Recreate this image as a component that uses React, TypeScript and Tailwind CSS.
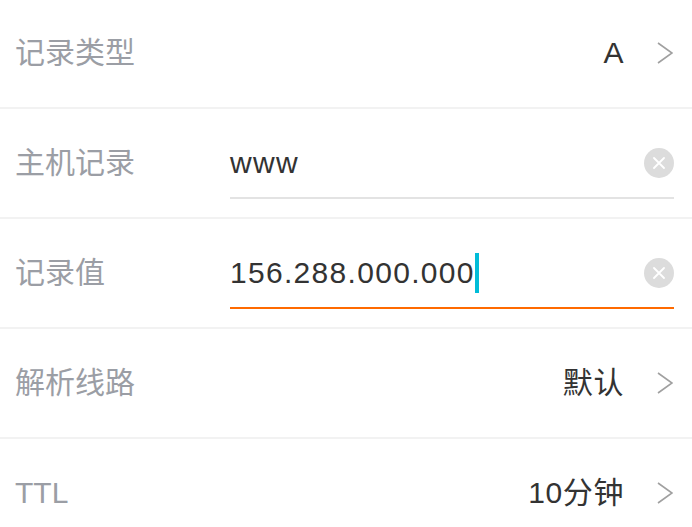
import React from 'react';

const font = { fontFamily: '"Liberation Sans", "Noto Sans CJK SC", sans-serif' };

function Chevron() {
  return (
    <svg width="16" height="22" viewBox="0 0 16 22" className="shrink-0 ml-[33px]">
      <polyline points="1,1 15,11 1,21" fill="none" stroke="#a0a0a0" strokeWidth="1.6" />
    </svg>
  );
}

function ClearButton() {
  return (
    <div className="w-[30px] h-[30px] rounded-full bg-[#dcdcdc] flex items-center justify-center shrink-0">
      <svg width="12" height="12" viewBox="0 0 12 12">
        <path d="M1 1 L11 11 M11 1 L1 11" stroke="#ffffff" strokeWidth="1.8" strokeLinecap="round" />
      </svg>
    </div>
  );
}

function SelectRow({ label, value }: { label: string; value: string }) {
  return (
    <div className="flex items-center h-[110px] pl-[15px] pr-[19px] border-b-2 border-[#f2f2f2]">
      <div className="text-[30px] leading-none text-[#9b9ea5]">{label}</div>
      <div className="flex-1" />
      <div className="text-[30px] leading-none text-[#333333] tracking-[0.6px]">{value}</div>
      <Chevron />
    </div>
  );
}

function InputRow({ label, value, focused }: { label: string; value: string; focused?: boolean }) {
  return (
    <div className="flex items-center h-[110px] pl-[15px] pr-[18px] border-b-2 border-[#f2f2f2]">
      <div className="w-[215px] shrink-0 text-[30px] leading-none text-[#9b9ea5]">{label}</div>
      <div
        className={
          'flex-1 flex items-center h-[70px] mt-[2px] border-b-2 ' +
          (focused ? 'border-[#ff6a00]' : 'border-[#e3e3e3]')
        }
      >
        <div className="flex-1 flex items-center text-[30px] leading-none text-[#333333]">
          <span className="tracking-[1.3px]">{value}</span>
          {focused && <span className="inline-block w-[4px] h-[40px] bg-[#00bcd8]" />}
        </div>
        <ClearButton />
      </div>
    </div>
  );
}

export default function App() {
  return (
    <div className="w-[692px] h-[527px] overflow-hidden bg-white" style={font}>
      <div className="-mt-[1px]">
        <SelectRow label="记录类型" value="A" />
        <InputRow label="主机记录" value="www" />
        <InputRow label="记录值" value="156.288.000.000" focused />
        <SelectRow label="解析线路" value="默认" />
        <SelectRow label="TTL" value="10分钟" />
      </div>
    </div>
  );
}
